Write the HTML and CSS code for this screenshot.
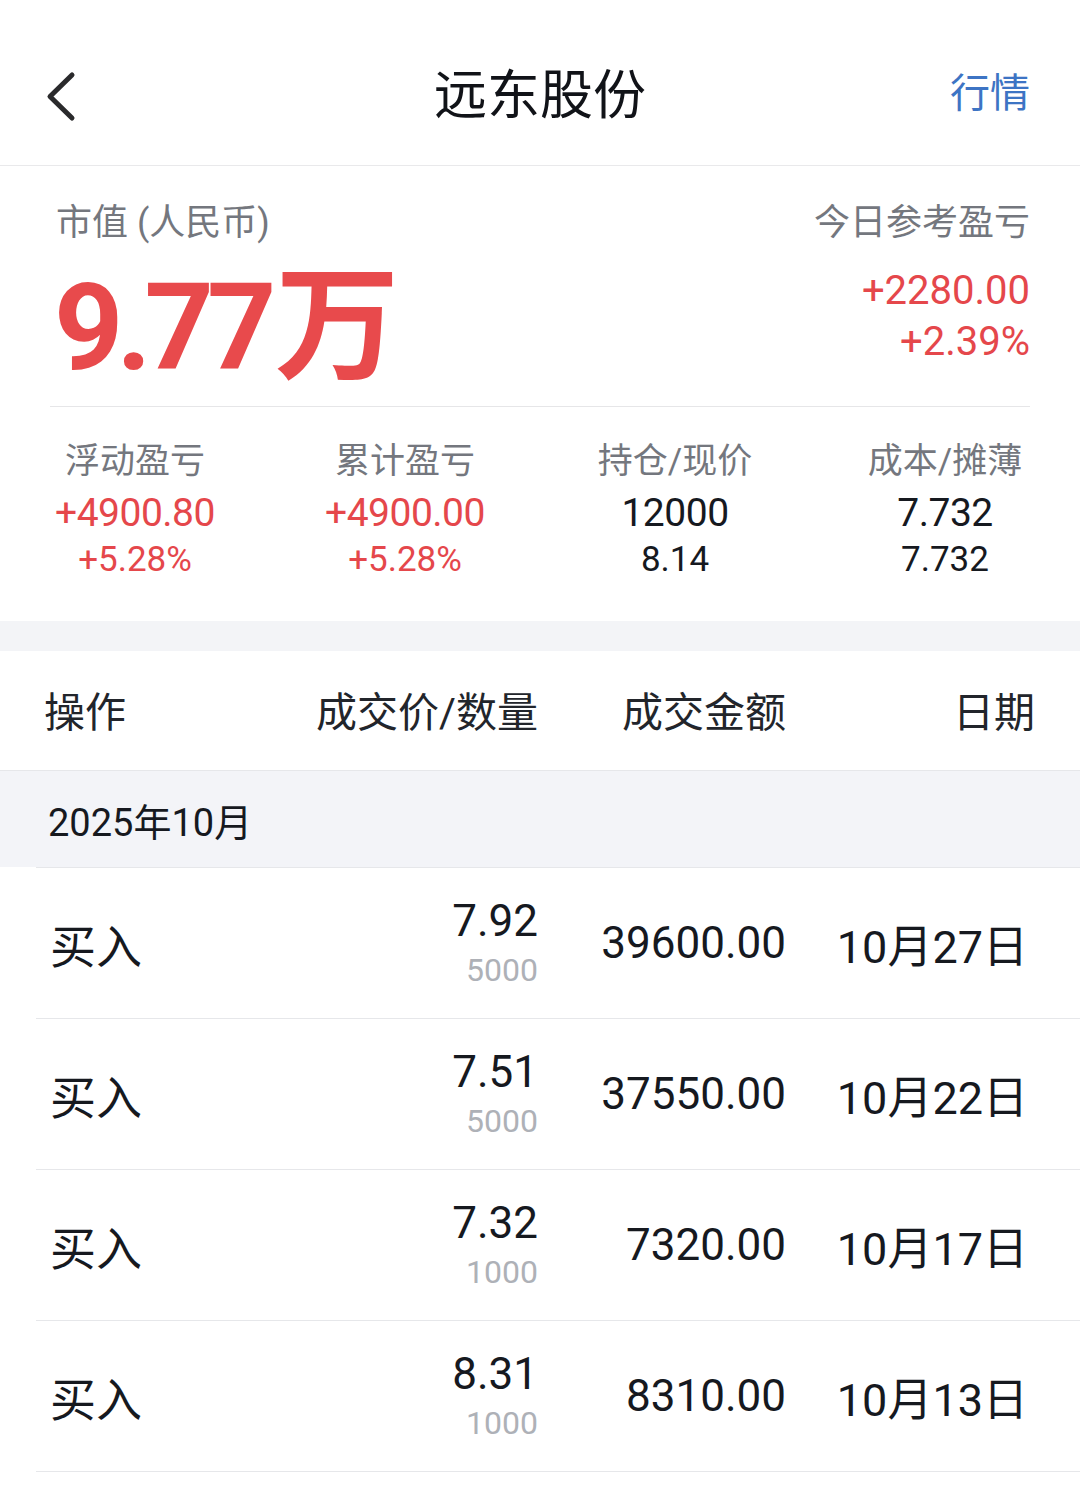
FILE: index.html
```html
<!DOCTYPE html>
<html lang="zh-CN">
<head>
    <meta charset="UTF-8">
    <meta name="viewport" content="width=device-width, initial-scale=1.0">
    <title>远东股份</title>
    <link rel="stylesheet" href="styles.css">
</head>
<body>
    <div class="topbar">
        <div class="back">
            <svg width="40" height="60" viewBox="0 0 40 60">
                <path d="M32 8 L10 29.5 L32 51" fill="none" stroke="#2a2a2c" stroke-width="5" stroke-linecap="round" stroke-linejoin="round"/>
            </svg>
        </div>
        <div class="page-title">远东股份</div>
        <div class="quote-link">行情</div>
    </div>

    <div class="summary">
        <div class="summary-top">
            <div class="mv">
                <div class="label top-label">市值 (人民币)</div>
                <div class="mv-value"><span class="num">9.77</span><span class="unit">万</span></div>
            </div>
            <div class="today">
                <div class="label top-label">今日参考盈亏</div>
                <div class="today-amt red">+2280.00</div>
                <div class="today-pct red">+2.39%</div>
            </div>
        </div>
        <div class="divider"></div>
    </div>

    <div class="stats">
        <div class="stat">
            <div class="label">浮动盈亏</div>
            <div class="stat-main red">+4900.80</div>
            <div class="stat-sub red">+5.28%</div>
        </div>
        <div class="stat">
            <div class="label">累计盈亏</div>
            <div class="stat-main red">+4900.00</div>
            <div class="stat-sub red">+5.28%</div>
        </div>
        <div class="stat">
            <div class="label">持仓/现价</div>
            <div class="stat-main">12000</div>
            <div class="stat-sub">8.14</div>
        </div>
        <div class="stat">
            <div class="label">成本/摊薄</div>
            <div class="stat-main">7.732</div>
            <div class="stat-sub">7.732</div>
        </div>
    </div>

    <div class="gap-band"></div>

    <div class="table-head">
        <div>操作</div>
        <div class="right">成交价/数量</div>
        <div class="right">成交金额</div>
        <div class="right">日期</div>
    </div>

    <div class="month">2025年10月</div>

    <div class="trade-row">
        <div class="op">买入</div>
        <div class="price right">
            <div class="price-val">7.92</div>
            <div class="qty">5000</div>
        </div>
        <div class="amount right">39600.00</div>
        <div class="date right">10月27日</div>
    </div>
    <div class="trade-row">
        <div class="op">买入</div>
        <div class="price right">
            <div class="price-val">7.51</div>
            <div class="qty">5000</div>
        </div>
        <div class="amount right">37550.00</div>
        <div class="date right">10月22日</div>
    </div>
    <div class="trade-row">
        <div class="op">买入</div>
        <div class="price right">
            <div class="price-val">7.32</div>
            <div class="qty">1000</div>
        </div>
        <div class="amount right">7320.00</div>
        <div class="date right">10月17日</div>
    </div>
    <div class="trade-row">
        <div class="op">买入</div>
        <div class="price right">
            <div class="price-val">8.31</div>
            <div class="qty">1000</div>
        </div>
        <div class="amount right">8310.00</div>
        <div class="date right">10月13日</div>
    </div>
</body>
</html>
```

FILE: styles.css
```css
body {
    margin: 0;
    background-color: white;
    font-family: Roboto, "Noto Sans CJK SC", sans-serif;
    color: #16191f;
}

.red {
    color: #e5474b;
}

.right {
    text-align: right;
}

.label {
    font-size: 35px;
    line-height: 44px;
    color: #74777e;
}

.top-label {
    font-size: 36px;
}

/* top bar */
.topbar {
    height: 137px;
    padding: 28px 50px 0 40px;
    border-bottom: 1px solid #e9e9eb;
    display: flex;
    align-items: center;
    justify-content: space-between;
    position: relative;
}

.back {
    width: 40px;
    height: 60px;
}

.page-title {
    position: absolute;
    left: 0;
    right: 0;
    top: 28px;
    line-height: 137px;
    text-align: center;
    font-size: 53px;
    color: #111318;
    pointer-events: none;
}

.quote-link {
    font-size: 40px;
    line-height: 50px;
    color: #3d74c4;
    margin-top: -6px;
}

/* summary */
.summary {
    padding: 35px 50px 0 50px;
}

.summary-top {
    display: flex;
    justify-content: space-between;
    align-items: flex-start;
}

.mv .label {
    margin-left: 6px;
}

.mv-value {
    margin-top: 10px;
    height: 128px;
    line-height: 120px;
    color: #e84a4c;
    font-weight: 700;
    white-space: nowrap;
}

.mv-value .num {
    font-size: 121px;
    letter-spacing: -7px;
    margin-left: 4px;
}

.mv-value .unit {
    font-size: 124px;
    font-family: "Noto Sans CJK SC", sans-serif;
    margin-left: 6px;
}

.today {
    text-align: right;
}

.today-amt {
    font-size: 40px;
    line-height: 51px;
    margin-top: 20px;
}

.today-pct {
    font-size: 40px;
    line-height: 51px;
}

.divider {
    height: 1px;
    background-color: #e6e6e8;
    margin-top: 23px;
}

.stats {
    display: grid;
    grid-template-columns: repeat(4, 1fr);
    padding: 33px 0 39px 0;
    text-align: center;
}

.stat-main {
    font-size: 39px;
    line-height: 50px;
    margin-top: 4px;
    letter-spacing: -0.5px;
}

.stat-sub {
    font-size: 35px;
    line-height: 44px;
}

.gap-band {
    height: 30px;
    background-color: #f3f4f7;
}

/* table */
.table-head {
    height: 115px;
    padding: 0 45px 4px 44px;
    border-bottom: 1px solid #e6e7ea;
    display: grid;
    grid-template-columns: 250px 244px 248px 1fr;
    align-items: center;
    font-size: 41px;
    color: #22252b;
}

.month {
    height: 96px;
    background-color: #f3f4f8;
    padding-left: 48px;
    display: flex;
    align-items: center;
    font-size: 38px;
    color: #16191f;
}

.trade-row {
    margin-left: 36px;
    height: 150px;
    border-top: 1px solid #e6e7ea;
    display: grid;
    grid-template-columns: 244px 244px 248px 1fr;
    align-items: center;
    padding: 0 52px 0 14px;
}

.trade-row:last-child {
    border-bottom: 1px solid #e6e7ea;
}

.op {
    font-size: 46px;
}

.price-val {
    font-size: 44px;
    line-height: 50px;
    margin-top: 4px;
}

.qty {
    font-size: 32px;
    line-height: 48px;
    color: #aeb1b7;
}

.amount {
    font-size: 44px;
}

.date {
    font-size: 45px;
}
```
